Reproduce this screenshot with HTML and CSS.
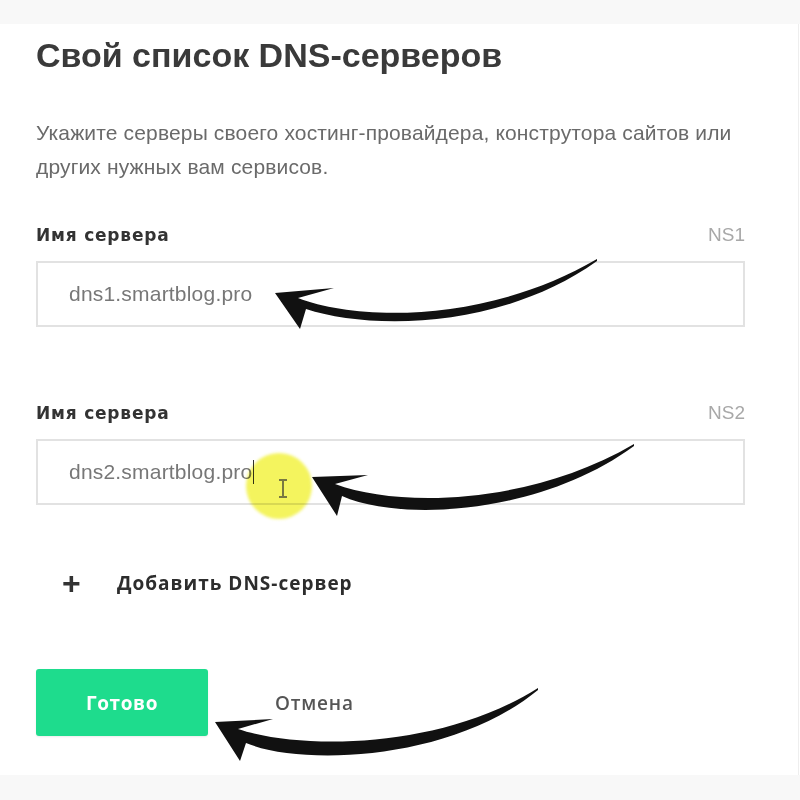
FILE: index.html
```html
<!DOCTYPE html>
<html lang="ru">
<head>
<meta charset="utf-8">
<title>Свой список DNS-серверов</title>
<link rel="stylesheet" href="styles.css">
</head>
<body>
<div class="topband"></div>
<main class="panel">
  <h1 class="title">Свой список DNS-серверов</h1>
  <p class="desc">Укажите серверы своего хостинг-провайдера, конструтора сайтов или других нужных вам сервисов.</p>

  <div class="field field-first">
    <div class="field-head"><span class="label">Имя сервера</span><span class="ns">NS1</span></div>
    <div class="input"><span class="value">dns1.smartblog.pro</span></div>
  </div>

  <div class="field field-second">
    <div class="field-head"><span class="label">Имя сервера</span><span class="ns">NS2</span></div>
    <div class="input"><span class="value">dns2.smartblog.pro</span><span class="caret"></span></div>
  </div>

  <div class="add-row"><span class="plus">+</span><span class="add-text">Добавить DNS-сервер</span></div>

  <div class="actions">
    <button class="btn-primary">Готово</button>
    <button class="btn-cancel">Отмена</button>
  </div>
</main>
<div class="bottomband"></div>

<div class="highlight"></div>
<svg class="overlay" width="800" height="800" viewBox="0 0 800 800">
  <g class="ibeam">
    <line x1="283" y1="481" x2="283" y2="496"/>
    <line x1="279" y1="480" x2="287" y2="480"/>
    <line x1="279" y1="497" x2="287" y2="497"/>
  </g>
  <path class="arrow" d="M275,293 L334,288 L298,298 C360,322 490,322 597,259 L597,261 C500,330 370,330 306,309 L300,329 Z"/>
  <path class="arrow" d="M312,477 L368,475 L335,484 C400,508 530,505 634,444 L634,446 C540,515 400,522 342,496 L337,516 Z"/>
  <path class="arrow" d="M215,722 L273,719 L238,729 C300,750 440,750 538,688 L538,690 C450,762 300,766 246,743 L240,761 Z"/>
</svg>
</body>
</html>
```

FILE: styles.css
```css
html, body {
  margin: 0;
  padding: 0;
  background: #ffffff;
}
body {
  width: 800px;
  height: 800px;
  position: relative;
  overflow: hidden;
  font-family: "Liberation Sans", Arial, sans-serif;
  color: #333;
  display: flex;
  flex-direction: column;
}
.topband {
  height: 24px;
  background: #f8f8f8;
  flex: none;
}
.bottomband {
  height: 25px;
  background: #f8f8f8;
  flex: none;
  margin-top: auto;
}
.panel {
  padding: 0 53px 0 36px;
  display: flex;
  flex-direction: column;
  border-right: 1px solid #eeeeee;
  margin-right: 1px;
  flex: 1;
}
.title {
  margin: 11px 0 0;
  font-size: 34px;
  line-height: 40px;
  font-weight: bold;
  color: #3a3a3a;
}
.desc {
  margin: 41px 0 0;
  font-size: 21px;
  line-height: 34px;
  letter-spacing: 0.15px;
  color: #6a6a6a;
}
.field-first { margin-top: 39px; }
.field-second { margin-top: 74px; }
.field-head {
  display: flex;
  justify-content: space-between;
  align-items: center;
  height: 24px;
}
.label {
  font-family: "DejaVu Sans", "Liberation Sans", sans-serif;
  font-size: 17px;
  letter-spacing: 0.8px;
  font-weight: bold;
  color: #333;
}
.ns {
  font-size: 19px;
  color: #a8a8a8;
}
.input {
  margin-top: 14px;
  height: 62px;
  border: 2px solid #e2e2e2;
  display: flex;
  align-items: center;
  padding-left: 31px;
}
.value {
  font-size: 21px;
  letter-spacing: 0.2px;
  color: #777;
}
.caret {
  width: 1px;
  height: 24px;
  background: #333;
  margin-left: 1px;
}
.add-row {
  margin-top: 66px;
  display: flex;
  align-items: center;
  height: 24px;
}
.plus {
  width: 81px;
  padding-left: 26px;
  box-sizing: border-box;
  font-size: 32px;
  font-weight: bold;
  color: #333;
  line-height: 24px;
}
.add-text {
  font-family: "Open Sans", "Liberation Sans", sans-serif;
  font-size: 19px;
  letter-spacing: 1px;
  font-weight: 700;
  color: #2d2d2d;
}
.actions {
  margin-top: 74px;
  display: flex;
  align-items: center;
}
.btn-primary {
  width: 172px;
  height: 67px;
  border: none;
  border-radius: 3px;
  background: #1edc8d;
  color: #fff;
  font-family: "Open Sans", "Liberation Sans", sans-serif;
  font-size: 19px;
  letter-spacing: 0.6px;
  font-weight: 700;
  box-shadow: 0 1px 2px rgba(0,0,0,0.08);
}
.btn-cancel {
  margin-left: 67px;
  background: none;
  border: none;
  padding: 0;
  font-family: "Open Sans", "Liberation Sans", sans-serif;
  font-size: 19px;
  letter-spacing: 0.8px;
  font-weight: 600;
  color: #555;
}
.highlight {
  position: absolute;
  left: 246px;
  top: 453px;
  width: 66px;
  height: 66px;
  border-radius: 50%;
  background: #f4f45e;
  mix-blend-mode: multiply;
  filter: blur(1.5px);
}
.overlay {
  position: absolute;
  left: 0;
  top: 0;
}
.arrow {
  fill: #111;
}
.ibeam line {
  stroke: #5a5a3a;
  stroke-width: 1.6;
}
```
